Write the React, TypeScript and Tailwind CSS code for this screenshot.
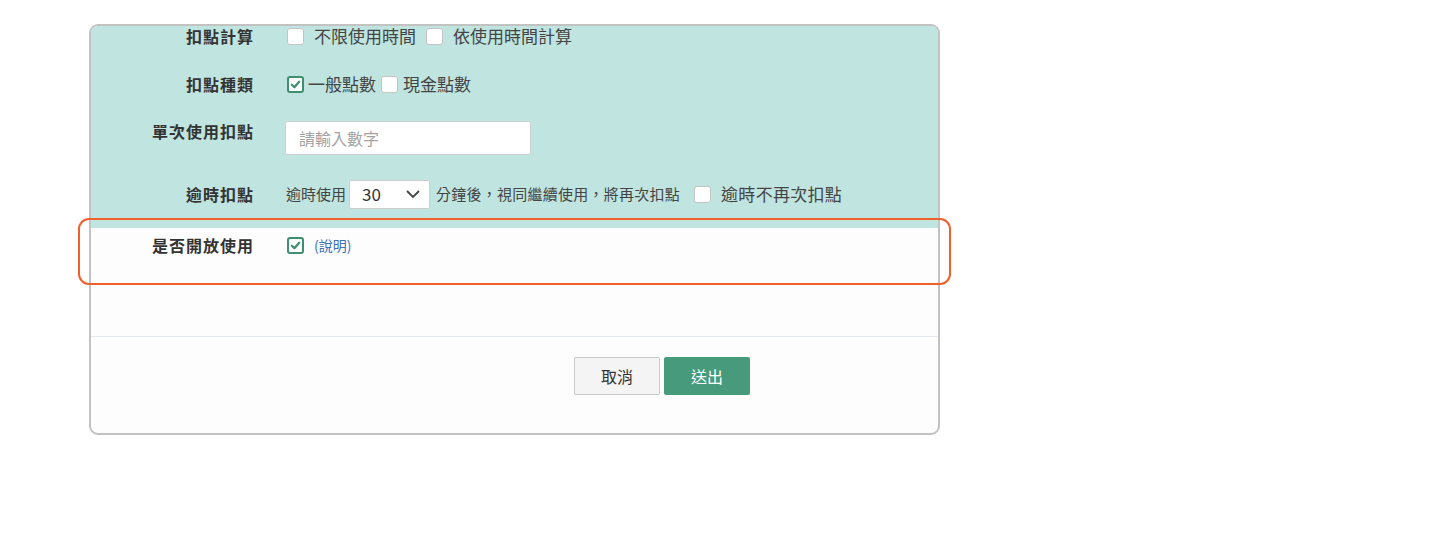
import React from "react";

const font = { fontFamily: '"Noto Sans CJK TC", "Noto Sans", sans-serif' };

function Box({ checked = false }: { checked?: boolean }) {
  if (checked) {
    return (
      <span className="flex h-[17px] w-[17px] shrink-0 items-center justify-center rounded-[3px] border-2 border-[#3d8f6f] bg-white">
        <svg viewBox="0 0 12 12" className="h-[11px] w-[11px]">
          <path d="M2 6.3 L4.8 9 L10 3" fill="none" stroke="#3d8f6f" strokeWidth="2.4" strokeLinecap="round" strokeLinejoin="round" />
        </svg>
      </span>
    );
  }
  return <span className="block h-[17px] w-[17px] shrink-0 rounded-[3px] border border-[#c4c4c4] bg-white" />;
}

export default function App() {
  return (
    <div className="min-h-[533px] w-[1454px] bg-white" style={font}>
      <div className="relative ml-[89px] pt-[24px]">
        <div className="w-[851px] overflow-hidden rounded-[9px] border-2 border-[#c2c2c2] bg-[#fdfdfd]">
          <div className="bg-[#c0e4df] pb-[20px]">
            {/* row 1 */}
            <div className="flex h-[20px] items-center">
              <div className="w-[164px] pr-[1px] text-right text-[16px] font-bold text-[#333] tracking-[1px]">扣點計算</div>
              <div className="ml-[32px] flex items-center text-[17px] text-[#444]">
                <Box />
                <span className="ml-[10px]">不限使用時間</span>
                <span className="ml-[10px] flex"><Box /></span>
                <span className="ml-[10px]">依使用時間計算</span>
              </div>
            </div>
            {/* row 2 */}
            <div className="mt-[26px] flex h-[24px] items-center">
              <div className="w-[164px] pr-[1px] text-right text-[16px] font-bold text-[#333] tracking-[1px]">扣點種類</div>
              <div className="ml-[32px] flex items-center text-[17px] text-[#444]">
                <Box checked />
                <span className="ml-[4px]">一般點數</span>
                <span className="ml-[5px] flex"><Box /></span>
                <span className="ml-[5px]">現金點數</span>
              </div>
            </div>
            {/* row 3 */}
            <div className="mt-[25px] flex h-[34px] items-start">
              <div className="-mt-[1px] w-[164px] pr-[1px] text-right text-[16px] font-bold leading-[22px] text-[#333] tracking-[1px]">單次使用扣點</div>
              <div className="ml-[30px] flex h-[34px] w-[246px] items-center rounded-[2px] border border-[#cfcfcf] bg-white px-[13px] text-[16px] text-[#a3a3a3]">
                請輸入數字
              </div>
            </div>
            {/* row 4 */}
            <div className="mt-[25px] flex h-[28px] items-center">
              <div className="w-[164px] pr-[1px] text-right text-[16px] font-bold text-[#333] tracking-[1px]">逾時扣點</div>
              <div className="ml-[31px] flex items-center text-[15px] text-[#444]">
                <span>逾時使用</span>
                <div className="ml-[3px] flex h-[29px] w-[81px] items-center justify-between rounded-[2px] border border-[#cfcfcf] bg-white pl-[12px] pr-[8px] text-[17px] text-[#333]">
                  <span>30</span>
                  <svg viewBox="0 0 16 16" className="h-[16px] w-[16px]">
                    <path d="M2 5 L8 11 L14 5" fill="none" stroke="#444" strokeWidth="1.8" />
                  </svg>
                </div>
                <span className="ml-[6px] tracking-[0.25px]">分鐘後，視同繼續使用，將再次扣點</span>
                <span className="ml-[14px] flex"><Box /></span>
                <span className="ml-[10px] text-[17px] tracking-[0.3px]">逾時不再次扣點</span>
              </div>
            </div>
          </div>
          {/* row 5 */}
          <div className="flex h-[108px] items-start pt-[8px]">
            <div className="flex h-[18px] items-center">
              <div className="w-[164px] pr-[1px] text-right text-[16px] font-bold text-[#333] tracking-[1px]">是否開放使用</div>
              <div className="ml-[32px] flex items-center">
                <Box checked />
                <span className="ml-[10px] text-[14px] text-[#3f6fb6]">(說明)</span>
              </div>
            </div>
          </div>
          <div className="h-px bg-[#e4e8f0]" />
          <div className="flex justify-start pb-[38px] pt-[20px]">
            <div className="ml-[483px] flex gap-[4px]">
              <button className="h-[38px] w-[86px] rounded-[2px] border border-[#c9c9c9] bg-[#f4f4f4] text-[16px] text-[#333]">取消</button>
              <button className="h-[38px] w-[86px] rounded-[2px] bg-[#479b7c] text-[16px] text-white">送出</button>
            </div>
          </div>
        </div>
        {/* highlight box */}
        <div className="pointer-events-none absolute left-[-11px] top-[218px] h-[67px] w-[873px] rounded-[11px] border-2 border-[#f0602b]" />
      </div>
    </div>
  );
}
